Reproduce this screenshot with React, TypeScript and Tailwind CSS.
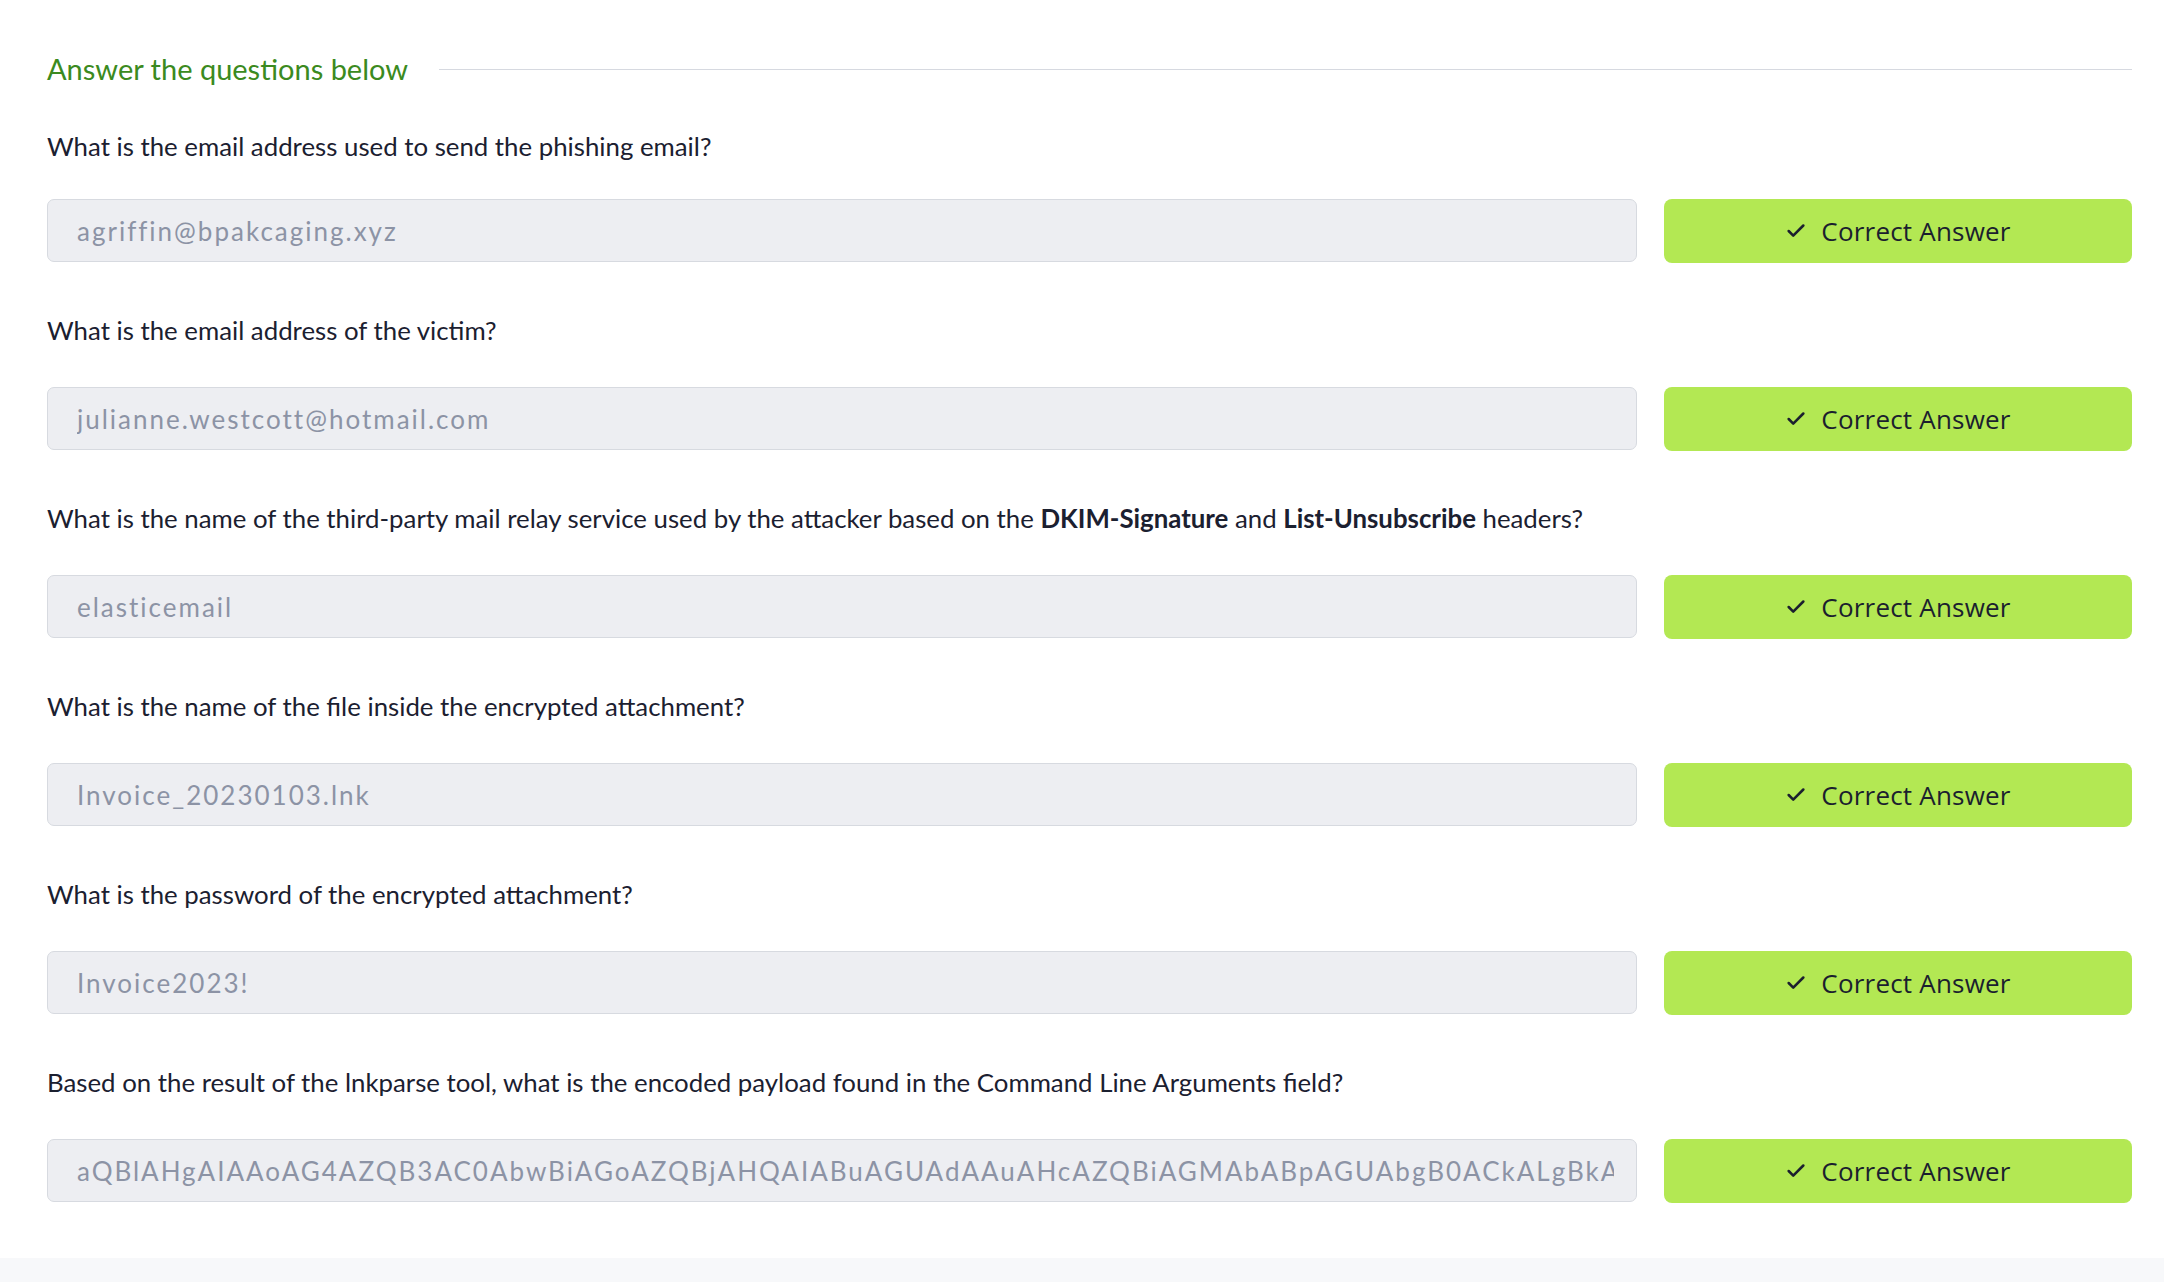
import React from 'react';
import { Check } from 'lucide-react';

interface QuestionProps {
  question: React.ReactNode;
  answer: string;
}

const QuestionRow: React.FC<QuestionProps & { first?: boolean }> = ({ question, answer, first }) => (
  <div className={first ? 'mt-[39px]' : 'mt-[49px]'}>
    <p className="text-[25.8px] leading-[36px] text-[#1b2030]">{question}</p>
    <div className={`${first ? 'mt-[35px]' : 'mt-[39px]'} flex items-stretch gap-[27px]`}>
      <input
        readOnly
        value={answer}
        className="h-[63px] min-w-0 flex-1 rounded-[7px] border border-[#d7dae0] bg-[#edeef2] pl-[29px] pr-[22px] text-[26px] tracking-[2px] text-[#8c93a5] outline-none"
        style={{ fontFamily: '"Source Sans Pro", Lato, "Noto Sans", sans-serif' }}
      />
      <button className="flex h-[64px] w-[468px] items-center justify-center gap-[14px] rounded-[8px] bg-[#b3e853] text-[26px] text-[#1b1f2e] [font-family:'Open_Sans',sans-serif]">
        <Check className="h-[22px] w-[22px]" strokeWidth={2.8} />
        <span className="tracking-[0.2px]">Correct Answer</span>
      </button>
    </div>
  </div>
);

const App: React.FC = () => {
  const questions: QuestionProps[] = [
    {
      question: 'What is the email address used to send the phishing email?',
      answer: 'agriffin@bpakcaging.xyz',
    },
    {
      question: 'What is the email address of the victim?',
      answer: 'julianne.westcott@hotmail.com',
    },
    {
      question: (
        <>
          What is the name of the third-party mail relay service used by the attacker based on the{' '}
          <b className="font-bold">DKIM-Signature</b> and <b className="font-bold">List-Unsubscribe</b> headers?
        </>
      ),
      answer: 'elasticemail',
    },
    {
      question: 'What is the name of the file inside the encrypted attachment?',
      answer: 'Invoice_20230103.lnk',
    },
    {
      question: 'What is the password of the encrypted attachment?',
      answer: 'Invoice2023!',
    },
    {
      question:
        'Based on the result of the lnkparse tool, what is the encoded payload found in the Command Line Arguments field?',
      answer:
        'aQBlAHgAIAAoAG4AZQB3AC0AbwBiAGoAZQBjAHQAIABuAGUAdAAuAHcAZQBiAGMAbABpAGUAbgB0ACkALgBkAG8AdwBuAGwAbwBhAGQAcwB0AHIAaQBuAGcAKAAnAGgAdAB0AHAAOgAvAC8A',
    },
  ];

  return (
    <div className="flex min-h-screen flex-col bg-white [font-family:'Source_Sans_Pro',Lato,'Noto_Sans',sans-serif]">
      <section className="pb-[55px] pl-[47px] pr-[32px] pt-[49px]">
        <div className="flex items-center">
          <h3 className="text-[29px] leading-[40px] text-[#3b8a20]">Answer the questions below</h3>
          <div className="ml-[31px] h-px flex-1 bg-[#d6d9e0]" />
        </div>
        {questions.map((q, i) => (
          <QuestionRow key={i} first={i === 0} question={q.question} answer={q.answer} />
        ))}
      </section>
      <div className="flex-1 bg-[#f7f8fa]" />
    </div>
  );
};

export default App;
